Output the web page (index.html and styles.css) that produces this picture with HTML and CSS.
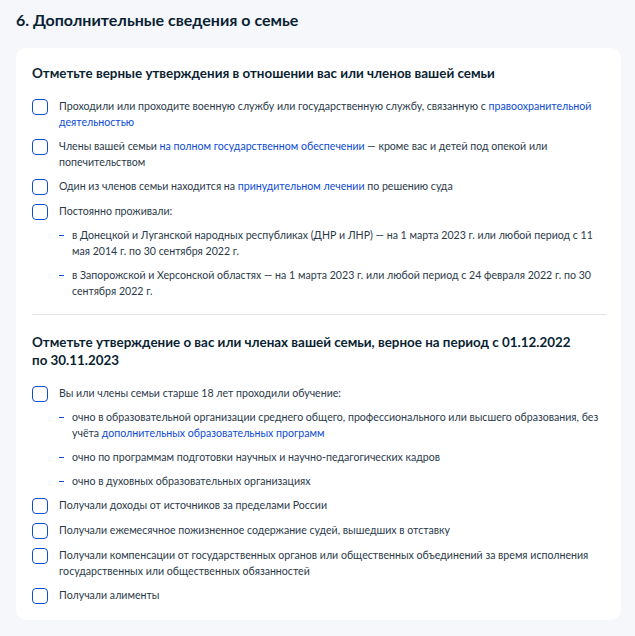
FILE: index.html
```html
<!DOCTYPE html>
<html lang="ru">
<head>
    <meta charset="UTF-8">
    <meta name="viewport" content="width=device-width, initial-scale=1.0">
    <title>Дополнительные сведения о семье</title>
    <link rel="stylesheet" href="styles.css">
</head>
<body>
    <h2 class="section-title">6. Дополнительные сведения о семье</h2>

    <div class="card">
        <h3 class="group-title">Отметьте верные утверждения в отношении вас или членов вашей семьи</h3>

        <div class="options">
            <label class="option">
                <span class="checkbox"></span>
                <span class="option-text">Проходили или проходите военную службу или государственную службу, связанную с <a href="#">правоохранительной деятельностью</a></span>
            </label>
            <label class="option">
                <span class="checkbox"></span>
                <span class="option-text">Члены вашей семьи <a href="#">на полном государственном обеспечении</a> — кроме вас и детей под опекой или попечительством</span>
            </label>
            <label class="option">
                <span class="checkbox"></span>
                <span class="option-text">Один из членов семьи находится на <a href="#">принудительном лечении</a> по решению суда</span>
            </label>
            <div class="option">
                <span class="checkbox"></span>
                <div class="option-text">
                    Постоянно проживали:
                    <ul class="sublist">
                        <li>в Донецкой и Луганской народных республиках (ДНР и ЛНР) — на 1 марта 2023 г. или любой период с 11 мая 2014 г. по 30 сентября 2022 г.</li>
                        <li>в Запорожской и Херсонской областях — на 1 марта 2023 г. или любой период с 24 февраля 2022 г. по 30 сентября 2022 г.</li>
                    </ul>
                </div>
            </div>
        </div>

        <hr class="divider">

        <h3 class="group-title">Отметьте утверждение о вас или членах вашей семьи, верное на период с 01.12.2022 по 30.11.2023</h3>

        <div class="options">
            <div class="option">
                <span class="checkbox"></span>
                <div class="option-text">
                    Вы или члены семьи старше 18 лет проходили обучение:
                    <ul class="sublist">
                        <li>очно в образовательной организации среднего общего, профессионального или высшего образования, без учёта <a href="#">дополнительных образовательных программ</a></li>
                        <li>очно по программам подготовки научных и научно-педагогических кадров</li>
                        <li>очно в духовных образовательных организациях</li>
                    </ul>
                </div>
            </div>
            <label class="option">
                <span class="checkbox"></span>
                <span class="option-text">Получали доходы от источников за пределами России</span>
            </label>
            <label class="option">
                <span class="checkbox"></span>
                <span class="option-text">Получали ежемесячное пожизненное содержание судей, вышедших в отставку</span>
            </label>
            <label class="option">
                <span class="checkbox"></span>
                <span class="option-text">Получали компенсации от государственных органов или общественных объединений за время исполнения государственных или общественных обязанностей</span>
            </label>
            <label class="option">
                <span class="checkbox"></span>
                <span class="option-text">Получали алименты</span>
            </label>
        </div>
    </div>
</body>
</html>
```

FILE: styles.css
```css
body {
    margin: 0;
    padding: 10px 14px 20px 16px;
    background-color: #f5f7fb;
    font-family: Lato, "Liberation Sans", sans-serif;
    color: #0b1f33;
}

.section-title {
    margin: 0 0 18px;
    font-size: 16px;
    line-height: 20px;
    font-weight: 700;
}

.card {
    background-color: #fff;
    border-radius: 10px;
    padding: 16px 15px 16px 16px;
}

.group-title {
    max-width: 550px;
    margin: 0 0 16px;
    font-size: 13.4px;
    line-height: 18px;
    font-weight: 700;
}

.options {
    display: flex;
    flex-direction: column;
    gap: 8px;
}

.option {
    display: flex;
    align-items: flex-start;
    gap: 11px;
    font-size: 10.6px;
    line-height: 16px;
    color: #2b3a4a;
    cursor: pointer;
}

.checkbox {
    flex: none;
    width: 16px;
    height: 16px;
    margin-top: 1px;
    box-sizing: border-box;
    border: 1.5px solid #0d4cd3;
    border-radius: 4px;
}

.option-text a {
    color: #0d4cd3;
    text-decoration: none;
}

.sublist {
    list-style: none;
    margin: 8px 0 0;
    padding: 0;
    display: flex;
    flex-direction: column;
    gap: 8px;
}

.sublist li {
    position: relative;
    padding-left: 13px;
}

.sublist li::before {
    content: "";
    position: absolute;
    left: 0;
    top: 8px;
    width: 5px;
    height: 1px;
    background-color: #0d4cd3;
}

.divider {
    border: none;
    border-top: 1px solid #e1e4e8;
    margin: 15px 0 18px;
}
```
